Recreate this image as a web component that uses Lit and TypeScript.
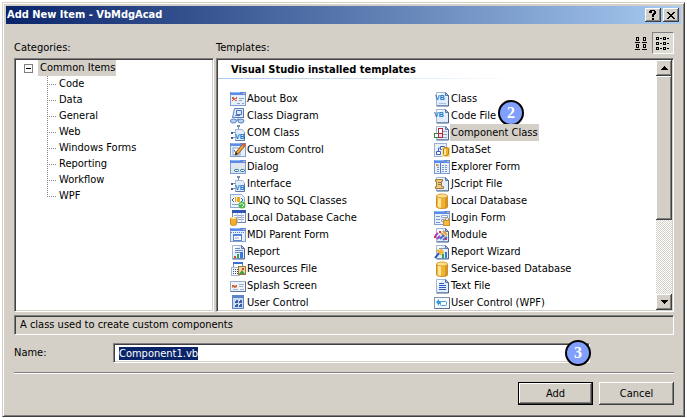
import { LitElement, html, svg, css } from "lit";
import { customElement, property, state } from "lit/decorators.js";
import { classMap } from "lit/directives/class-map.js";

/* ---------- icon parts ---------- */

const page = svg`
  <path d="M2.500 1.500h9l3 3v10h-12z" fill="#e3edfb" stroke="#9fb6d8"/>
  <path d="M3 2h5L3 9z" fill="#fff"/>
  <path d="M14.500 4.500v10.500h-12" fill="none" stroke="#4a638c"/>
  <path d="M11.500 1.500v3h3z" fill="#b9cdea" stroke="#5a75a3"/>`;

const vb = (x: number, y: number) => svg`
  <text x=${x} y=${y} font-family="Liberation Sans, sans-serif" font-size="7" font-weight="bold" fill="#1478c8">VB</text>`;

const form = svg`
  <rect x="0" y="1" width="16" height="14" fill="#7f9dd2"/>
  <rect x="1" y="4" width="14" height="10" fill="#e6effc"/>
  <rect x="0" y="1" width="16" height="3" fill="#5a8ce8"/>
  <rect x="1" y="1" width="9" height="1" fill="#8db4f7"/>
  <rect x="13" y="2" width="2" height="1" fill="#ffb46a"/>`;

const cylinder = svg`
  <path d="M2 3v10.500c0 3 12 3 12 0V3z" fill="#f2b42e"/>
  <path d="M4 4v11l3 1V5z" fill="#ffe79a"/>
  <path d="M11 5v11l3-2V3z" fill="#d8952a"/>
  <path d="M2.500 3v10.500c0 2.500 11 2.500 11 0V3" fill="none" stroke="#c98f2c"/>
  <ellipse cx="8" cy="3" rx="5.500" ry="2" fill="#ffe08a" stroke="#d8a23c"/>`;

const com = svg`
  <path d="M5.500 4.500h7l2 3v8h-9z" fill="#e3edfb" stroke="#9fb6d8"/>
  <path d="M14.500 7.500v8h-9" fill="none" stroke="#5f7aa6"/>
  <path d="M8.500 4V1M2 7.500h3M2 12.500h3" fill="none" stroke="#7f90aa"/>
  <rect x="7" y="0" width="3" height="2" fill="#7d8ea8"/>
  <rect x="1" y="7" width="2" height="2" fill="#4b5b74"/>
  <rect x="1" y="12" width="2" height="2" fill="#4b5b74"/>
  ${vb(5, 14)}`;

const icons: Record<string, unknown> = {
  about: svg`${form}
    <path d="M2 6h2v1h2v-1h1v2H5v1h2v1H5V9H3v1H2V9h1V8H2z" fill="#d8602b"/>
    <path d="M9 7.500h5M9 9.500h3M7 12.500h3M12 12.500h2" stroke="#8f9fbd"/>`,
  diagram: svg`
    <path d="M4.500 .5h9v9h-11z" fill="#dbe8fd" stroke="#5c7fbd"/>
    <path d="M6.500 2.500h5v4h-5zM13.500 1v9M5 7.500h5" fill="none" stroke="#4f74b6"/>
    <path d="M8 10v2M3 12h10" stroke="#5c7fbd"/>
    <ellipse cx="3.500" cy="13" rx="3" ry="2" fill="#b9d0f5" stroke="#5c7fbd"/>
    <ellipse cx="11" cy="13" rx="3" ry="2" fill="#b9d0f5" stroke="#5c7fbd"/>`,
  com,
  custom: svg`${form}
    <rect x="3" y="6" width="7" height="7" fill="#fff" stroke="#8aa1c8"/>
    <path d="M4 8l2 3 2-2" fill="none" stroke="#2d56a8"/>
    <path d="M5 13l1-3 7-8 2 2-7 8z" fill="#f0a63c" stroke="#8a5514"/>
    <path d="M12 3l1-2h2l1 2-2 2z" fill="#d65c4c"/><path d="M5 13l1-3 2 2z" fill="#333"/>`,
  dialog: svg`${form}
    <rect x="1" y="4" width="14" height="10" fill="#dfe6ee"/>
    <rect x="4.500" y="10.500" width="4" height="2" rx="1" fill="#fff" stroke="#1f6f95"/>
    <rect x="10.500" y="10.500" width="4" height="2" rx="1" fill="#fff" stroke="#1f6f95"/>`,
  linq: svg`
    <path d="M.5 1.500h11l3 3v10H.5z" fill="#eef4fd" stroke="#8fa8d0"/>
    <path d="M4 5L2 7l2 2M11 5l2 2-2 2" fill="none" stroke="#3f64a6"/>
    <path d="M5 4h5v5H5z" fill="#eca92c"/><path d="M6 4h1v5H6z" fill="#ffe79a"/>
    <path d="M2 11.500h7" stroke="#8aa1c8"/>
    <circle cx="12" cy="12" r="3.500" fill="#4fb848"/>
    <path d="M10 12c0-2 3-2 4 0M12 14l2-2" fill="none" stroke="#e8ffe4"/>`,
  cache: svg`
    <rect x="2" y="0" width="14" height="13" fill="#7289bd"/>
    <rect x="3" y="3" width="12" height="9" fill="#f5f9ff"/>
    <rect x="2" y="0" width="14" height="3" fill="#2f55b5"/>
    <path d="M4 5.500h10M4 7.500h10M4 9.500h10" stroke="#94a8d0"/><path d="M7.500 3v9M11.500 3v9" stroke="#b9c8e4"/>
    <path d="M.5 8v6c0 2 6 2 6 0V8z" fill="#f0b02c" stroke="#c98f2c"/>
    <ellipse cx="3.500" cy="8" rx="3" ry="1" fill="#ffe79a"/>`,
  mdi: svg`${form}
    <path d="M1 5.500h14" stroke="#5f7fb8" stroke-dasharray="1 1"/>
    <rect x="3.500" y="7.500" width="8" height="6" fill="#fff" stroke="#6484c0"/>
    <rect x="3" y="7" width="9" height="2" fill="#4f83e3"/>
    <rect x="5" y="10" width="4" height="2" fill="#c6cfd8"/>`,
  report: svg`${page}
    <path d="M5 4.500h5M5 6.500h8M5 8.500h5" stroke="#6f8dc0"/>
    <rect x="4" y="12" width="2" height="2" fill="#e0462c"/>
    <rect x="7" y="10" width="2" height="4" fill="#2fa84a"/>
    <rect x="10" y="8" width="3" height="6" fill="#3a78e0"/>`,
  resources: svg`
    <rect x="3.500" y="1.500" width="9" height="5" fill="#fff" stroke="#7289bd"/>
    <rect x="3" y="1" width="10" height="2" fill="#3f6fd0"/>
    <rect x="1.500" y="6.500" width="8" height="8" fill="#f5f9ff" stroke="#a8b4ca"/>
    <path d="M3 8.500h6M3 10.500h6M3 12.500h6" stroke="#3f4f70" stroke-dasharray="1 1"/>
    <rect x="8.500" y="5.500" width="7" height="8" fill="#f7d9a0" stroke="#9b7a3c"/>
    <path d="M9 13l3-4 3 4z" fill="#3f9a4c"/><rect x="12" y="7" width="2" height="2" fill="#d8432e"/>`,
  splash: svg`
    <rect x=".5" y="3.500" width="15" height="10" fill="#edf3fd" stroke="#9aaccd"/>
    <path d="M2 7h2l1 1 1-1h1v2l-2 1-2-1-1 1z" fill="#d8602b"/>
    <path d="M9 6.500h5M9 8.500h4M3 11.500h5M10 11.500h4" stroke="#9fb0cc"/>
    <path d="M15.500 4v9.500H1" fill="none" stroke="#5b7096"/>`,
  control: svg`
    <rect x="2" y="1" width="12" height="14" fill="#5f83c9"/>
    <rect x="3" y="4" width="10" height="10" fill="#c7d8f4"/>
    <path d="M5 6h3v3H5zM9 6h3v3H9zM5 10h3v3H5zM9 10h3v3H9z" fill="#3f5f9e"/>
    <path d="M5 6h1v1H5zM9 6h1v1H9zM5 10h1v1H5zM9 10h1v1H9z" fill="#fff"/>`,
  vbclass: svg`${page}${vb(1, 9)}<path d="M5 12.500h7" stroke="#a8bfe0"/>`,
  code: svg`${page}${vb(0, 9)}`,
  component: svg`${page}
    <path d="M8 6.500h5M8 9.500h5M8 12.500h5" stroke="#8fa4c6"/>
    <rect x="4.500" y="3.500" width="4" height="5" fill="#fff" stroke="#b3263c"/>
    <rect x=".5" y="8.500" width="4" height="4" fill="#fff" stroke="#2f8a3a"/>
    <rect x="4.500" y="8.500" width="4" height="4" fill="#f6dbe0" stroke="#b3263c"/>`,
  dataset: svg`
    <rect x=".5" y="1.500" width="12" height="13" fill="#e9f1fd" stroke="#9ab0d4"/>
    <path d="M6.500 4.500h4v3h-4zM2.500 9.500h4v3h-4zM4.500 9V6h2" fill="#fff" stroke="#3c62c0"/>
    <rect x="8" y="5" width="8" height="10" fill="#f7dc94"/>
    <path d="M9.500 7v5c0 2 5 2 5 0V7c0-2-5-2-5 0z" fill="#f0b02c" stroke="#b98020"/>
    <rect x="10" y="7" width="2" height="6" fill="#ffe79a"/>`,
  explorer: svg`${form}
    <path d="M3 6.500h3M8 6.500h6M3 8.500h3M8 8.500h6M3 10.500h3M8 10.500h6M3 12.500h3M8 12.500h6" stroke="#7b95c8" stroke-dasharray="2 1"/>
    <path d="M6.500 4v10" stroke="#5577b8"/><rect x="2" y="5" width="2" height="2" fill="#ef8a3c"/>`,
  script: svg`${page}
    <path d="M1.500 3.500h7v2h-1v5h2v2h-8v-2h1v-5h-1z" fill="#e8c986" stroke="#a07a34"/>
    <path d="M4 6.500h3M4 8.500h3" stroke="#a07a34"/>`,
  database: cylinder,
  login: svg`${form}
    <path d="M2 6.500h4M2 9.500h4M2 12.500h4" stroke="#7b95c8"/>
    <path d="M7.500 5.500h6v2h-6zM7.500 9.500h3v2h-3z" fill="#fff" stroke="#94a8d0"/>
    <path d="M11.500 11V9c0-2 3-2 3 0v2" fill="none" stroke="#b98a2c"/>
    <rect x="9.500" y="10.500" width="6" height="5" fill="#f3b83e" stroke="#c98f2c"/>`,
  module: svg`${page}
    <path d="M1 9l3-3M3 12l3-3" stroke="#b03cc0" stroke-width="2"/>
    <path d="M7 6l4 4M9 4l4 4" stroke="#e0a02c" stroke-width="2"/>
    <path d="M6 12l4-4M9 13l4-3" stroke="#3f6fd8" stroke-width="2"/>
    <path d="M0 10h2M5 5h2M11 12h2" stroke="#d03860" stroke-width="2"/>`,
  wizard: svg`${page}
    <path d="M5 4.500h6" stroke="#6f8dc0"/>
    <rect x="8" y="10" width="2" height="4" fill="#2fa84a"/>
    <rect x="11" y="8" width="2" height="6" fill="#3a78e0"/>
    <path d="M1 14l5-6" stroke="#2858c8" stroke-width="2"/>
    <path d="M3 5l3 1 2-2 1 3 2 2-3 1-1 2-2-3-2-1z" fill="#f6b63a"/>`,
  text: svg`${page}
    <path d="M5 5.500h5M5 7.500h7M5 9.500h7M5 11.500h7" stroke="#2c5cc0"/>`,
  wpf: svg`
    <rect x=".5" y="3.500" width="15" height="11" fill="#f6f9fe" stroke="#8494ae"/>
    <path d="M15.500 4v10.500H1" fill="none" stroke="#5f6f8c"/>
    <path d="M2 8l3-3v2h2v3H5v2z" fill="#2f9be0"/>
    <rect x="6.500" y="7.500" width="6" height="4" rx="1" fill="#fff" stroke="#4c9ad0"/>`,
};

interface Template { name: string; icon: string; }

const templates: Template[] = [
  { name: "About Box", icon: "about" },
  { name: "Class Diagram", icon: "diagram" },
  { name: "COM Class", icon: "com" },
  { name: "Custom Control", icon: "custom" },
  { name: "Dialog", icon: "dialog" },
  { name: "Interface", icon: "com" },
  { name: "LINQ to SQL Classes", icon: "linq" },
  { name: "Local Database Cache", icon: "cache" },
  { name: "MDI Parent Form", icon: "mdi" },
  { name: "Report", icon: "report" },
  { name: "Resources File", icon: "resources" },
  { name: "Splash Screen", icon: "splash" },
  { name: "User Control", icon: "control" },
  { name: "Class", icon: "vbclass" },
  { name: "Code File", icon: "code" },
  { name: "Component Class", icon: "component" },
  { name: "DataSet", icon: "dataset" },
  { name: "Explorer Form", icon: "explorer" },
  { name: "JScript File", icon: "script" },
  { name: "Local Database", icon: "database" },
  { name: "Login Form", icon: "login" },
  { name: "Module", icon: "module" },
  { name: "Report Wizard", icon: "wizard" },
  { name: "Service-based Database", icon: "database" },
  { name: "Text File", icon: "text" },
  { name: "User Control (WPF)", icon: "wpf" },
];

const categories = ["Code", "Data", "General", "Web", "Windows Forms", "Reporting", "Workflow", "WPF"];

const shared = css`
  * { box-sizing: border-box; }
  button {
    font: inherit;
    color: inherit;
    margin: 0;
    padding: 0;
    border: 0;
    background: none;
  }
  svg { display: block; flex: none; }
  .raised {
    display: flex;
    align-items: center;
    justify-content: center;
    background: #d4d0c8;
    box-shadow: inset -1px -1px #404040, inset 1px 1px #fff, inset -2px -2px #808080;
  }
  .sunken {
    border: 1px solid;
    border-color: #808080 #fff #fff #808080;
    box-shadow: inset 1px 1px #404040, inset -1px -1px #d4d0c8;
  }
`;

@customElement("category-tree")
export class CategoryTree extends LitElement {
  @state() private open = true;

  static styles = [shared, css`
    :host { display: block; padding: 0 0 0 8px; }
    .root { display: flex; align-items: center; height: 16px; }
    .toggle { width: 9px; height: 9px; margin-right: 5px; }
    .name { background: #d4d0c8; padding: 0 1px 0 2px; }
    .children { list-style: none; margin: 0; padding: 0 0 0 23px; }
    .child { display: flex; align-items: center; height: 16px; }
    .branch { width: 9px; height: 16px; margin-right: 3px; }
  `];

  render() {
    return html`
      <div class="root">
        <button class="toggle" aria-label="Expand or collapse" @click=${() => (this.open = !this.open)}>
          <svg width="9" height="9" shape-rendering="crispEdges">
            <rect x=".5" y=".5" width="8" height="8" fill="#fff" stroke="#808080"/>
            <path d="M2 4.500h5" stroke="#000"/>
          </svg>
        </button>
        <span class="name">Common Items</span>
      </div>
      ${this.open ? html`<ul class="children">
        ${categories.map((c, i) => html`<li class="child">
          <svg class="branch" shape-rendering="crispEdges">
            <path d="M.5 0V${i === categories.length - 1 ? 9 : 16}M2 8.500h7" stroke="#808080" stroke-dasharray="1 1" fill="none"/>
          </svg>${c}</li>`)}
      </ul>` : ""}`;
  }
}

@customElement("template-list")
export class TemplateList extends LitElement {
  @property() selected = "";

  static styles = [shared, css`
    :host { display: flex; overflow: hidden; }
    .main { flex: 1; min-width: 0; }
    .heading {
      margin: 0 0 11px;
      padding: 0 0 0 13px;
      height: 19px;
      font: bold 11px/20px "DejaVu Sans Condensed", "DejaVu Sans", sans-serif;
      background: linear-gradient(90deg, #a6caf0, #fff 68%) 0 100% / 100% 1px no-repeat;
    }
    .list {
      list-style: none;
      margin: 0;
      padding: 0 0 0 12px;
      display: grid;
      grid-template-columns: 204px 1fr;
      grid-template-rows: repeat(12, 17px) 16px;
      grid-auto-flow: column;
    }
    .item { display: flex; align-items: center; position: relative; }
    .icon { width: 16px; height: 16px; }
    .name { line-height: 17px; padding: 0 1px; white-space: nowrap; }
    .selected .name { background: #d4d0c8; }
    .badge { position: absolute; left: 64px; top: -7px; }
    .scroll {
      display: flex;
      flex-direction: column;
      width: 16px;
      background: repeating-conic-gradient(#fff 0 25%, #d4d0c8 0 50%) 0 0 / 2px 2px;
    }
    .arrow { height: 16px; }
    .thumb { height: 144px; }
    .gap { flex: 1; }
  `];

  render() {
    return html`
      <div class="main">
        <h2 class="heading">Visual Studio installed templates</h2>
        <ul class="list" role="listbox" aria-label="Templates">
          ${templates.map((t) => html`
            <li class=${classMap({ item: true, selected: t.name === this.selected })}
                role="option" aria-selected=${t.name === this.selected}
                @click=${() => (this.selected = t.name)}>
              <svg class="icon" viewBox="0 0 16 16">${icons[t.icon]}</svg>
              <span class="name">${t.name}</span>
              ${t.name === "Code File" ? html`<step-badge class="badge" label="2"></step-badge>` : ""}
            </li>`)}
        </ul>
      </div>
      <div class="scroll">
        <button class="raised arrow" aria-label="Scroll up">
          <svg width="7" height="4" shape-rendering="crispEdges"><path d="M3 0h1v1h1v1h1v1h1v1H0V3h1V2h1V1h1z"/></svg>
        </button>
        <div class="raised thumb"></div>
        <div class="gap"></div>
        <button class="raised arrow" aria-label="Scroll down">
          <svg width="7" height="4" shape-rendering="crispEdges"><path d="M0 0h7v1H6v1H5v1H4v1H3V3H2V2H1V1H0z"/></svg>
        </button>
      </div>`;
  }
}

@customElement("step-badge")
export class StepBadge extends LitElement {
  @property() label = "";

  static styles = css`
    :host {
      box-sizing: border-box;
      width: 26px;
      height: 26px;
      border: 2px solid #000;
      border-radius: 50%;
      background: #809fff;
      color: #fff;
      font: bold 16px/21px "Liberation Serif", serif;
      text-align: center;
    }
  `;

  render() {
    return html`${this.label}`;
  }
}

@customElement("app-root")
export class AppRoot extends LitElement {
  static styles = [shared, css`
    :host {
      display: block;
      padding: 2px;
      background: #fff;
      color: #000;
      font: 11px/16px "DejaVu Sans Condensed", "DejaVu Sans", sans-serif;
    }
    .window {
      background: #d4d0c8;
      border: 1px solid;
      border-color: #d4d0c8 #404040 #404040 #d4d0c8;
      box-shadow: inset 1px 1px #fff, inset -1px -1px #808080;
      padding: 3px;
    }
    .title {
      display: flex;
      align-items: center;
      height: 18px;
      padding: 0 2px 0 1px;
      background: linear-gradient(90deg, #0a246a, #a6caf0);
      color: #fff;
    }
    .caption { flex: 1; margin: 0; font: bold 11px/18px "DejaVu Sans Condensed", "DejaVu Sans", sans-serif; }
    .sys { width: 16px; height: 14px; margin-left: 2px; }
    .content { padding: 8px 7px 8px 8px; }
    .panes {
      display: grid;
      grid-template-columns: 200px minmax(0, 1fr);
      column-gap: 2px;
    }
    .pane { background: #fff; padding: 1px; }
    .label { align-self: end; height: 18px; }
    .top { display: flex; justify-content: space-between; height: 26px; }
    .views { display: flex; }
    .view {
      width: 22px;
      height: 22px;
      display: flex;
      align-items: center;
      justify-content: center;
      border: 1px solid transparent;
    }
    .pressed { border-color: #808080 #fff #fff #808080; background: #dedbd5; }
    .about {
      margin: 3px 0 8px;
      height: 20px;
      padding: 0 5px;
      line-height: 18px;
    }
    .row { display: flex; align-items: center; position: relative; }
    .row-label { width: 99px; }
    .field {
      width: 477px;
      height: 20px;
      padding: 0 5px;
      font: inherit;
      background: #fff;
      outline: none;
      border-radius: 0;
    }
    .field::selection { background: #0a246a; color: #fff; }
    .badge { position: absolute; left: 551px; top: -3px; }
    .rule { border: 0; border-top: 1px solid #808080; border-bottom: 1px solid #fff; margin: 9px 0 8px; }
    .actions { display: flex; justify-content: flex-end; gap: 6px; }
    .action { width: 75px; height: 23px; }
    .default { border: 1px solid #000; }
  `];

  firstUpdated() {
    const field = this.renderRoot.querySelector("input")!;
    field.focus();
    field.select();
  }

  render() {
    return html`
      <div class="window">
        <header class="title">
          <h1 class="caption">Add New Item - VbMdgAcad</h1>
          <button class="raised sys" aria-label="Help">
            <svg width="8" height="10" shape-rendering="crispEdges"><path d="M1 0h5v1h1v3H6v1H5v2H3V4h1V3h1V1H3v2H0V1h1zM3 8h2v2H3z"/></svg>
          </button>
          <button class="raised sys" aria-label="Close">
            <svg width="8" height="7" shape-rendering="crispEdges"><path d="M0 0h2v1h1v1h2V1h1V0h2v1H7v1H6v1H5v1h1v1h1v1h1v1H6V6H5V5H3v1H2v1H0V6h1V5h1V4h1V3H2V2H1V1H0z"/></svg>
          </button>
        </header>
        <main class="content">
          <div class="panes">
            <span class="label">Categories:</span>
            <div class="top">
              <span class="label">Templates:</span>
              <div class="views">
                <button class="view" aria-label="Large icons">
                  <svg width="12" height="13" shape-rendering="crispEdges">
                    <g fill="none" stroke="#000">
                      <path d="M1.500.5h2v3h-2zM8.500.5h2v3h-2zM1.500 7.500h2v3h-2zM8.500 7.500h2v3h-2z"/>
                      <path d="M0 5.500h5M7 5.500h5M0 12.500h5M7 12.500h5"/>
                    </g>
                  </svg>
                </button>
                <button class="view pressed" aria-label="Small icons" aria-pressed="true">
                  <svg width="14" height="13" shape-rendering="crispEdges">
                    <g fill="none" stroke="#000">
                      <path d="M.5.5h2v2h-2zM7.500.5h2v2h-2zM.5 5.500h2v2h-2zM7.500 5.500h2v2h-2zM.5 10.500h2v2h-2zM7.500 10.500h2v2h-2z"/>
                      <path d="M4 1.500h2M11 1.500h2M4 6.500h2M11 6.500h2M4 11.500h2M11 11.500h2"/>
                    </g>
                  </svg>
                </button>
              </div>
            </div>
            <div class="sunken pane"><category-tree></category-tree></div>
            <div class="sunken pane"><template-list selected="Component Class"></template-list></div>
          </div>
          <div class="sunken about">A class used to create custom components</div>
          <div class="row">
            <label class="row-label" for="name">Name:</label>
            <input class="field sunken" id="name" type="text" value="Component1.vb" spellcheck="false">
            <step-badge class="badge" label="3"></step-badge>
          </div>
          <hr class="rule">
          <div class="actions">
            <button class="raised action default">Add</button>
            <button class="raised action">Cancel</button>
          </div>
        </main>
      </div>`;
  }
}
